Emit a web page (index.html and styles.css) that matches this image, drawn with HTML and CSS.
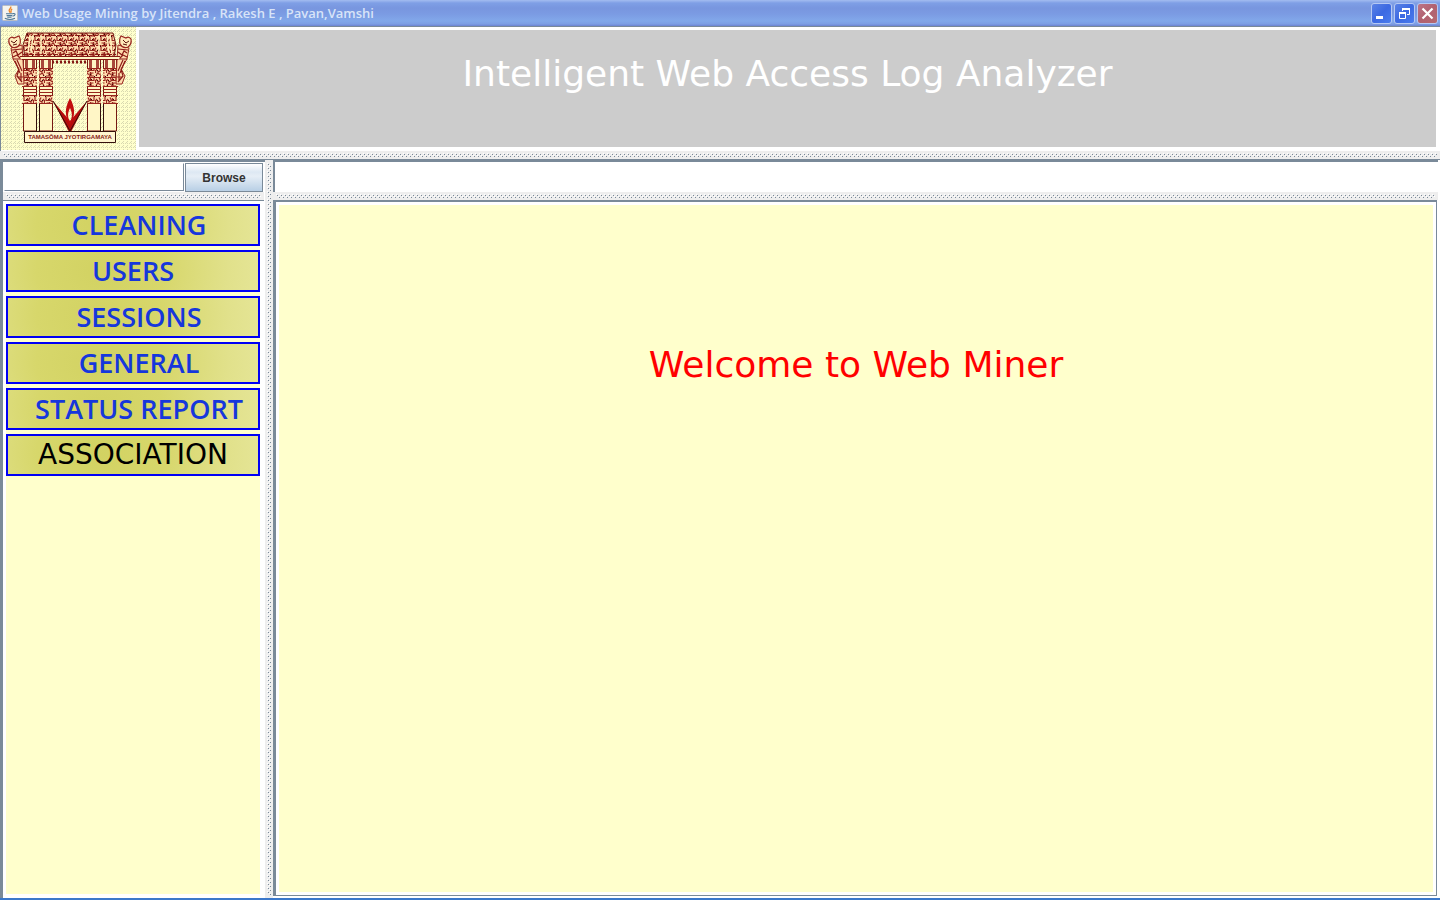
FILE: index.html
```html
<!DOCTYPE html>
<html lang="en">
<head>
<meta charset="utf-8">
<title>Web Usage Mining</title>
<link rel="stylesheet" href="styles.css">
</head>
<body>
<div class="window">
  <header class="titlebar">
    <svg class="app-icon" viewBox="0 0 16 16" aria-hidden="true">
      <rect x=".5" y=".5" width="15" height="15" rx="1" fill="#f3f3f0" stroke="#b9bdc4"/>
      <path d="M8.600 1.500C10 3.200 6 4.300 7.300 6.200L8.200 7.800M10.200 3.800C7.900 5 9.800 6 8.800 7.800" fill="none" stroke="#ee8322" stroke-width="1.300"/>
      <path d="M4 8.700h7M4.600 10.600h5.600M5.300 12.300h4.200M11 8.600c3-.6 2.700 2.200-.4 2.500M2.800 13.300c3 1.300 7.400 1.300 10.200 0" fill="none" stroke="#4e7896" stroke-width="1.100"/>
    </svg>
    <span class="caption">Web Usage Mining by Jitendra , Rakesh E , Pavan,Vamshi</span>
    <div class="controls">
      <button class="control" aria-label="Minimize"><svg viewBox="0 0 21 21"><path d="M5 13h7v3H5z" fill="#fff"/></svg></button>
      <button class="control" aria-label="Restore"><svg viewBox="0 0 21 21" fill="none" stroke="#fff"><path d="M8.500 8V5.500h7v6H13"/><path d="M8 6h8" stroke-width="2"/><path d="M5.500 9.500h6v6h-6z"/><path d="M5 10h7" stroke-width="2"/></svg></button>
      <button class="control control-close" aria-label="Close"><svg viewBox="0 0 21 21"><path d="M5.500 5.500l10 10M15.500 5.500l-10 10" stroke="#fff" stroke-width="2.200"/></svg></button>
    </div>
  </header>

  <section class="banner">
    <svg class="logo" viewBox="0 0 135 123" role="img" aria-label="College emblem">
      <defs>
        <pattern id="dither" width="4" height="4" patternUnits="userSpaceOnUse">
          <rect width="4" height="4" fill="#ffffcc"/>
          <path d="M0 0h1v1H0zM2 2h1v1H2zM2 0h1v1H2zM1 3h1v1H1z" fill="#d9d9b0"/>
        </pattern>
        <pattern id="carving" width="11" height="10" patternUnits="userSpaceOnUse">
          <rect width="11" height="10" fill="#ffdcae"/>
          <path d="M1 0v3.500h3.500V1M7 .500l-1.500 3 2 1.500 2.500-3M1.500 6h2.500v3H1M6 7.500l2.500-1.500 1.500 3M4.500 5l1 5M10.500 3v3" fill="none" stroke="#982820" stroke-width="1.200"/>
          <path d="M3 2h1v1H3zM8 3h1v1H8zM4 7h1v1H4zM0 9h1v1H0zM9 8h1v1H9z" fill="#3d0b08"/>
        </pattern>
        <g id="pillars">
          <path d="M22.500 32h13v72h-13zM38.500 32h13v72h-13z" fill="#fff6c6" stroke="#761812"/>
          <path d="M22 42h14v18H22zM38 42h14v18H38z" fill="url(#carving)"/>
          <path d="M22 68h14v8H22zM38 68h14v8H38z" fill="url(#carving)"/>
          <path d="M22 41.500h14M38 41.500h14M21 50.500h15M38 50.500h14M21 59.500h15M38 59.500h14M22 62.500h14M38 62.500h14M22 65.500h14M38 65.500h14M21 68.500h15M38 68.500h14M21 76.500h15M38 76.500h14" stroke="#98241d"/>
          <path d="M24 33h3v8h-3zM31 33h3v8h-3zM40 33h3v8h-3zM47 33h3v8h-3z" fill="#a9473b"/>
          <path d="M35.500 77v27M38.500 77v27" stroke="#35100b"/>
          <path d="M10 21l11-3 1 14 1 25h-6l-3-8 4-7-6-10z" fill="#ffdcae" stroke="#98241d"/>
          <path d="M11 23l10-1M12 26l3-2 2 4 4-3M12 30l4-2 3 3M14 34l5 12M16 33l5 11M18 42l-2 7 5 6M20 46v8M17 50h5M12 32h10" fill="none" stroke="#8c1b16" stroke-width="1.200"/>
          <path d="M8 12q2-3 5-1l5-2q2 3 1 8-3 5-8 3-4-3-3-8z" fill="#ffe9ba" stroke="#98241d" stroke-width="1.200"/>
          <path d="M10 14l3 2 3-3M12 18l4-1" fill="none" stroke="#5b110c"/>
        </g>
      </defs>
      <rect width="135" height="123" fill="url(#dither)"/>
      <path d="M26 6h86l3 12-2 12H24l-2-12z" fill="url(#carving)" stroke="#761812"/>
      <path d="M26 8.500h86M23 18.500h91M22 27.500h93" stroke="#8c1b16" stroke-dasharray="5 1"/>
      <path d="M29 8l-2 18M109 8l2 18M40 8v19M98 8v19M32 8l-2 18M106 8l2 18" stroke="#fff1bd" stroke-width="1.500"/>
      <use href="#pillars"/>
      <use href="#pillars" transform="translate(138 0) scale(-1 1)"/>
      <path d="M19 29.500h100M21 32.500h96" stroke="#851914"/>
      <path d="M20 31h98" stroke="#fff6c6" stroke-width="2"/>
      <path d="M51 35h36" stroke="#851914" stroke-width="3" stroke-dasharray="2 2"/>
      <path d="M52 74L69 94 86 74 70 105h-2z" fill="#b50c0c"/>
      <path d="M52 74l17 30 17-30" fill="none" stroke="#35100b"/>
      <path d="M69 71c-6 11-5 19 0 27 5-8 6-16 0-27zm0 10c3 6 2 10 0 14-2-4-3-8 0-14z" fill="#c20e0e" fill-rule="evenodd"/>
      <path d="M23.500 104.500h91v11h-91z" fill="#fff6d0" stroke="#35100b"/>
      <text class="motto" x="69" y="112" text-anchor="middle">TAMASŌMA JYOTIRGAMAYA</text>
    </svg>
    <h1 class="banner-title">Intelligent Web Access Log Analyzer</h1>
  </section>
  <div class="divider"></div>

  <main class="workspace">
    <aside class="sidebar">
      <div class="file-row">
        <input class="file-path" type="text" aria-label="Log file">
        <button class="browse">Browse</button>
      </div>
      <div class="divider"></div>
      <nav class="menu">
        <button class="menu-item menu-item-inset">CLEANING</button>
        <button class="menu-item">USERS</button>
        <button class="menu-item menu-item-inset">SESSIONS</button>
        <button class="menu-item menu-item-inset">GENERAL</button>
        <button class="menu-item menu-item-inset">STATUS REPORT</button>
        <button class="menu-item menu-item-plain">ASSOCIATION</button>
      </nav>
    </aside>
    <div class="divider divider-vertical"></div>
    <section class="content">
      <div class="status"></div>
      <div class="divider"></div>
      <div class="panel-frame">
        <div class="panel"><h2 class="welcome">Welcome to Web Miner</h2></div>
      </div>
    </section>
  </main>
</div>
</body>
</html>
```
FILE: styles.css
```css
* { box-sizing: border-box; }
body { margin: 0; background: #fff; }
button { font: inherit; padding: 0; }
h1, h2 { margin: 0; font-weight: 400; }

.window {
  display: flex;
  flex-direction: column;
  min-height: 100vh;
  border-bottom: 2px solid #3b78cb;
}

.titlebar {
  display: flex;
  align-items: center;
  gap: 4px;
  height: 27px;
  padding: 0 2px;
  border-bottom: 1px solid #7a8a99;
  background: linear-gradient(#a3bcf0 0, #7f9fe6 3px, #7896df 8px, #7b9be3 14px, #82a8ea 21px, #7d9ee4 24px, #6d83d2 26px);
}
.app-icon { width: 16px; height: 16px; }
.caption {
  flex: 1;
  color: #d8e4f8;
  font: 600 13px/16px "Open Sans", "Noto Sans", sans-serif;
}
.controls { display: flex; gap: 2px; }
.control {
  width: 21px;
  height: 21px;
  border: 1px solid #b5c8f3;
  border-radius: 3px;
  background: linear-gradient(135deg, #5a82e6, #3c69e2 50%, #4a7cee);
}
.control svg { display: block; width: 21px; height: 21px; margin: -1px; }
.control-close { background: linear-gradient(135deg, #bd7587, #b16170 50%, #b5696f); }

.banner {
  display: flex;
  gap: 3px;
  height: 124px;
  border-left: 1px solid #7a8a99;
  padding-right: 4px;
}
.logo { flex: none; width: 135px; height: 123px; }
.motto { font: bold 6px "Liberation Sans", Arial, sans-serif; fill: #851914; }
.banner-title {
  flex: 1;
  margin: 3px 0 4px;
  padding-top: 22px;
  background: #ccc;
  color: #fff;
  text-align: center;
  font: 36px/44px "DejaVu Sans", Verdana, sans-serif;
}

/* Split-pane divider with a dotted grip */
.divider {
  flex: none;
  height: 8px;
  padding: 2px 3px;
  background: #eee;
}
.divider::before {
  content: "";
  display: block;
  height: 100%;
  background:
    conic-gradient(from 270deg at 1px 1px, #fff 90deg, transparent 0) 0 0 / 4px 4px,
    conic-gradient(from 270deg at 1px 1px, #7a8a99 90deg, transparent 0) 1px 1px / 4px 4px,
    conic-gradient(from 270deg at 1px 1px, #fff 90deg, transparent 0) 2px 2px / 4px 4px,
    conic-gradient(from 270deg at 1px 1px, #7a8a99 90deg, transparent 0) 3px 3px / 4px 4px;
}
.divider-vertical { height: auto; padding: 3px 2px; }

.workspace {
  flex: 1;
  display: grid;
  grid-template-columns: 265px 8px 1fr;
  border-top: 1px solid #7a8a99;
}
.sidebar {
  display: flex;
  flex-direction: column;
  border-left: 3px solid #7a8a99;
  border-top: 2px solid #7a8a99;
  padding-right: 1px;
}
.file-row { display: flex; gap: 1px; height: 30px; padding: 1px 1px 0; }
.file-path {
  flex: 1;
  min-width: 0;
  margin-bottom: 1px;
  border: 1px solid #7a8a99;
  border-top-color: #fff;
  border-left-color: #fff;
  background: #fff;
  font: 12px "Liberation Sans", Arial, sans-serif;
}
.browse {
  width: 78px;
  border: 1px solid #7a8a99;
  background: linear-gradient(#fff, #dde8f3 30%, #e6eef6 45%, #b8cfe5);
  color: #333;
  font: bold 12px "Liberation Sans", Arial, sans-serif;
}
.menu {
  flex: 1;
  display: flex;
  flex-direction: column;
  gap: 4px;
  margin-top: 1px;
  border: solid #fff;
  border-width: 3px 4px 4px 3px;
  box-shadow: 0 -1px #7a8a99;
  background: #ffffcc;
}
.menu-item {
  height: 42px;
  border: 2px solid #0000f5;
  background: radial-gradient(ellipse 160px 120px at 37% 50%, #d2d262, #d7d76b 40%, #e1e18b 80%, #e5e596);
  color: #1637dc;
  font: 600 27px/38px "Open Sans", "Noto Sans", sans-serif;
  white-space: nowrap;
}
.menu-item-inset { padding-left: 12px; }
.menu-item-plain { color: #000; font: 28px/38px "DejaVu Sans", Verdana, sans-serif; }

.content { display: flex; flex-direction: column; padding-right: 2px; }
.status {
  height: 32px;
  border: solid #7a8a99;
  border-width: 2px 0 0 2px;
}
.panel-frame {
  flex: 1;
  display: flex;
  border: solid #7a8a99;
  border-width: 2px 1px 1px 3px;
  margin: 0 1px 2px 0;
}
.panel {
  flex: 1;
  border: 3px solid #fff;
  background: #ffffcc;
  padding-top: 138px;
}
.welcome {
  color: #f00;
  text-align: center;
  font: 36px/44px "DejaVu Sans", Verdana, sans-serif;
}
```
